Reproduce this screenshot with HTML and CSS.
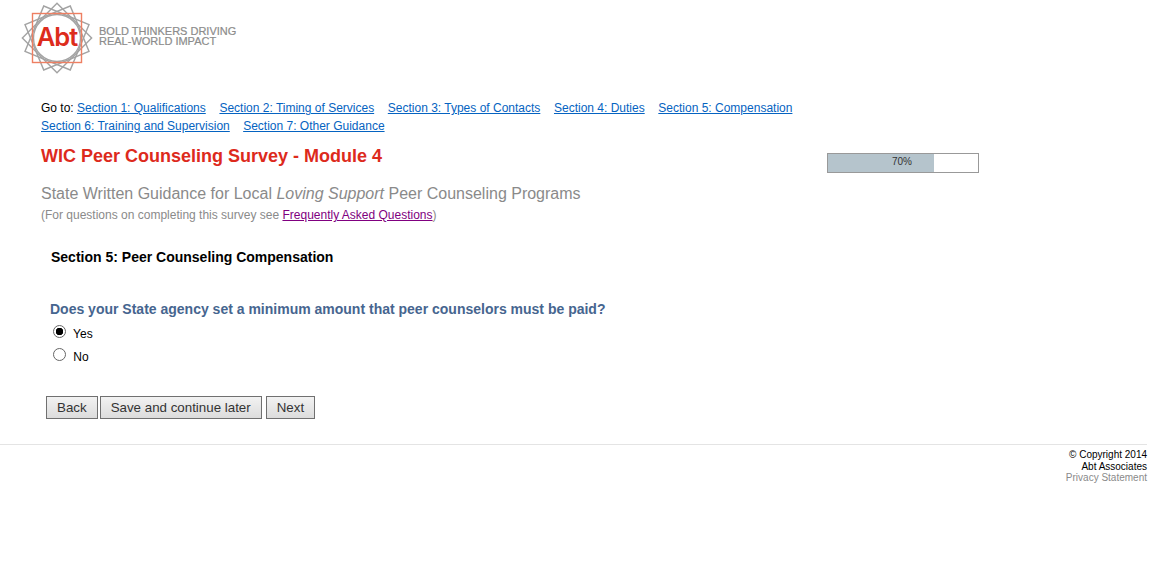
FILE: index.html
```html
<!DOCTYPE html>
<html lang="en">
<head>
    <meta charset="UTF-8">
    <title>WIC Peer Counseling Survey</title>
    <link rel="stylesheet" href="styles.css">
</head>
<body>
    <div class="logo">
        <div class="logo-mark">
            <svg width="72" height="72" viewBox="-36 -36 72 72" fill="none">
                <g stroke="#a3a3a3" stroke-width="1.4">
                    <rect x="-24.5" y="-24.5" width="49" height="49" transform="rotate(22.5)"/>
                    <rect x="-24.5" y="-24.5" width="49" height="49" transform="rotate(45)"/>
                    <rect x="-24.5" y="-24.5" width="49" height="49" transform="rotate(67.5)"/>
                    <circle r="23.5" fill="#fff"/>
                </g>
                <rect x="-24.5" y="-24.5" width="49" height="49" stroke="#ee7f62" stroke-width="1.4"/>
            </svg>
            <span class="logo-abt">Abt</span>
        </div>
        <div class="logo-tag">BOLD THINKERS DRIVING<br>REAL-WORLD IMPACT</div>
    </div>

    <div class="content">
        <div class="goto">
            Go to: <a href="#">Section 1: Qualifications</a>
            <a href="#">Section 2: Timing of Services</a>
            <a href="#">Section 3: Types of Contacts</a>
            <a href="#">Section 4: Duties</a>
            <a href="#">Section 5: Compensation</a><br>
            <a href="#" class="first">Section 6: Training and Supervision</a>
            <a href="#" class="last">Section 7: Other Guidance</a>
        </div>

        <div class="title-row">
            <h1>WIC Peer Counseling Survey - Module 4</h1>
            <div class="progress"><div class="progress-fill"></div><span>70%</span></div>
        </div>

        <h2>State Written Guidance for Local <em>Loving Support</em> Peer Counseling Programs</h2>
        <p class="faq">(For questions on completing this survey see <a href="#">Frequently Asked Questions</a>)</p>

        <h3>Section 5: Peer Counseling Compensation</h3>

        <form class="question">
            <p class="question-text">Does your State agency set a minimum amount that peer counselors must be paid?</p>
            <label class="option"><input type="radio" name="q" checked> Yes</label>
            <label class="option"><input type="radio" name="q"> No</label>
            <div class="buttons">
                <button type="button">Back</button>
                <button type="button">Save and continue later</button>
                <button type="button" class="next">Next</button>
            </div>
        </form>
    </div>

    <div class="footer">
        <div>© Copyright 2014</div>
        <div>Abt Associates</div>
        <div class="privacy">Privacy Statement</div>
    </div>
</body>
</html>
```

FILE: styles.css
```css
body {
    margin: 0;
    font-family: "Liberation Sans", Arial, sans-serif;
    background-color: white;
    color: black;
}

.logo {
    display: flex;
    align-items: center;
    height: 76px;
    padding-left: 21px;
}

.logo-mark {
    position: relative;
    width: 72px;
    height: 72px;
}

.logo-abt {
    position: absolute;
    top: 19px;
    left: 0;
    width: 72px;
    text-align: center;
    font-family: Inter, "Liberation Sans", sans-serif;
    font-size: 25.5px;
    font-weight: 600;
    line-height: 32px;
    letter-spacing: -1px;
    color: #dd2c1c;
}

.logo-tag {
    margin: -4px 0 0 6px;
    font-size: 11px;
    line-height: 10px;
    -webkit-text-stroke: 0.2px #8c8c8c;
    color: #8c8c8c;
}

.content {
    padding: 23px 0 0 41px;
}

.goto {
    font-size: 12px;
    line-height: 18px;
}

.goto a {
    color: #0563c1;
    margin-left: 10.3px;
}

.goto a:first-child,
.goto a.first {
    margin-left: 0;
}

.goto a.last {
    margin-left: 10px;
}

.title-row {
    display: flex;
    width: 938px;
    justify-content: space-between;
    margin-top: 10px;
}

h1 {
    margin: 0;
    font-size: 18px;
    line-height: 22px;
    color: #dd2a1c;
}

.progress {
    position: relative;
    width: 150px;
    height: 18px;
    margin-top: 8px;
    border: 1px solid #999;
    font-size: 10px;
    line-height: 15px;
    text-align: center;
    color: #333;
}

.progress-fill {
    position: absolute;
    top: 0;
    left: 0;
    width: 106px;
    height: 100%;
    background-color: #b5c4cc;
}

.progress span {
    position: relative;
    left: -1px;
}

h2 {
    margin: 11px 0 0;
    font-size: 16px;
    line-height: 20px;
    font-weight: normal;
    color: #8a8a8a;
}

.faq {
    margin: 3px 0 0;
    font-size: 12px;
    line-height: 16px;
    color: #8a8a8a;
}

.faq a {
    color: purple;
}

h3 {
    margin: 25px 0 0 10px;
    font-size: 14px;
    line-height: 18px;
}

.question {
    margin: 34px 0 0 9px;
}

.question-text {
    margin: 0 0 5px;
    font-size: 14px;
    line-height: 18px;
    font-weight: bold;
    color: #46658f;
}

.option {
    display: block;
    font-size: 12px;
    line-height: 23px;
}

.option input {
    appearance: none;
    width: 13px;
    height: 13px;
    margin: 0 4px 0 3px;
    vertical-align: 0;
    border: 1px solid #666;
    border-radius: 50%;
    background-color: white;
}

.option input:checked {
    background-image: radial-gradient(circle, black 3.5px, white 4px);
}

.buttons {
    display: flex;
    margin: 27px 0 0 -4px;
}

button {
    height: 23px;
    padding: 0 10px;
    margin-right: 2px;
    font-family: "Liberation Sans", Arial, sans-serif;
    font-size: 13.33px;
    color: #333;
    background: linear-gradient(#f2f2f2, #dcdcdc);
    border: 1px solid #707070;
}

.next {
    margin-left: 2px;
}

.footer {
    margin-top: 25px;
    width: 1147px;
    padding-top: 4px;
    border-top: 1px solid #e4e4e4;
    text-align: right;
    font-size: 10px;
    line-height: 11.5px;
}

.privacy {
    color: #8a8a8a;
}
```
